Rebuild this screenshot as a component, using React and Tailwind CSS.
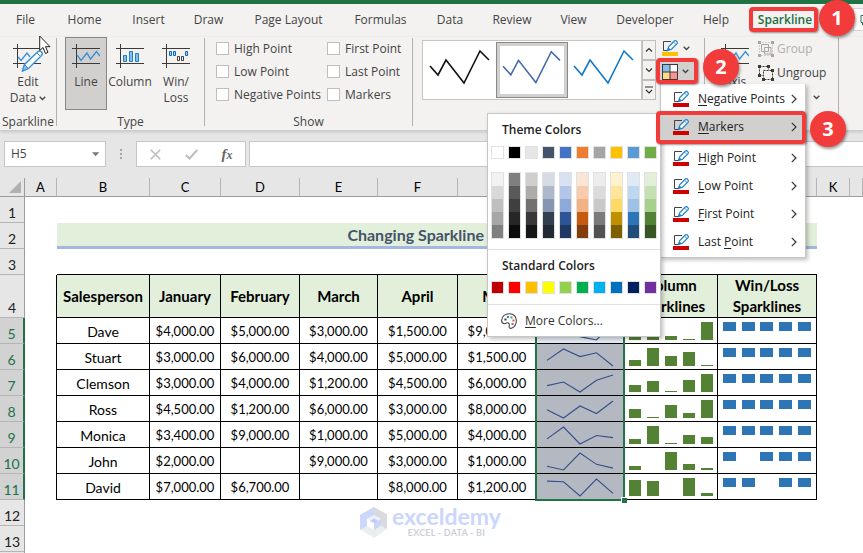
import React from "react";
import clsx from "clsx";

const TABS = [
  ["File", "w-[51px]"],
  ["Home", "w-[67px]"],
  ["Insert", "w-[61px]"],
  ["Draw", "w-[59px]"],
  ["Page Layout", "w-[101px]"],
  ["Formulas", "w-[83px]"],
  ["Data", "w-[56px]"],
  ["Review", "w-[68px]"],
  ["View", "w-[55px]"],
  ["Developer", "w-[88px]"],
  ["Help", "w-[54px]"],
];

const MONTHS = ["January", "February", "March", "April", "May"];

const PEOPLE = [
  ["Dave", [4000, 5000, 3000, 1500, 9000]],
  ["Stuart", [3000, 6000, 4000, 5000, 1500]],
  ["Clemson", [3000, 4000, 1200, 4500, 6000]],
  ["Ross", [4500, 1200, 6000, 3000, 8000]],
  ["Monica", [3400, 9000, 1000, 5000, 4000]],
  ["John", [2000, null, 9000, 3000, 1000]],
  ["David", [7000, 6700, null, 8000, 1200]],
];

const COLUMNS = [
  ["A", "w-8"],
  ["B", "w-[93px]"],
  ["C", "w-[71px]"],
  ["D", "w-[79px]"],
  ["E", "w-[78px]"],
  ["F", "w-[80px]"],
  ["G", "w-[79px]"],
  ["H", "w-[88px]"],
  ["I", "w-[93px]"],
  ["J", "w-[99px]"],
  ["K", "w-[33px]"],
  ["", ""],
];

const THEME = [
  ["White", "bg-white", ["bg-[#f2f2f2]", "bg-[#d9d9d9]", "bg-[#bfbfbf]", "bg-[#a6a6a6]", "bg-[#7f7f7f]"]],
  ["Black", "bg-black", ["bg-[#7f7f7f]", "bg-[#595959]", "bg-[#3f3f3f]", "bg-[#262626]", "bg-[#0c0c0c]"]],
  ["Light gray", "bg-[#e7e6e6]", ["bg-[#d0cece]", "bg-[#aeabab]", "bg-[#757070]", "bg-[#3a3838]", "bg-[#171616]"]],
  ["Blue-gray", "bg-[#44546a]", ["bg-[#d6dce4]", "bg-[#adb9ca]", "bg-[#8496b0]", "bg-[#323f4f]", "bg-[#222a35]"]],
  ["Blue", "bg-[#4472c4]", ["bg-[#d9e2f3]", "bg-[#b4c6e7]", "bg-[#8eaadb]", "bg-[#2f5496]", "bg-[#1f3864]"]],
  ["Orange", "bg-[#ed7d31]", ["bg-[#fbe5d5]", "bg-[#f7cbac]", "bg-[#f4b183]", "bg-[#c55a11]", "bg-[#833c0b]"]],
  ["Gray", "bg-[#a5a5a5]", ["bg-[#ededed]", "bg-[#dbdbdb]", "bg-[#c9c9c9]", "bg-[#7b7b7b]", "bg-[#525252]"]],
  ["Gold", "bg-[#ffc000]", ["bg-[#fff2cc]", "bg-[#fee599]", "bg-[#ffd965]", "bg-[#bf9000]", "bg-[#7f6000]"]],
  ["Light blue", "bg-[#5b9bd5]", ["bg-[#deebf6]", "bg-[#bdd7ee]", "bg-[#9cc3e5]", "bg-[#2e75b5]", "bg-[#1e4e79]"]],
  ["Green", "bg-[#70ad47]", ["bg-[#e2efd9]", "bg-[#c5e0b3]", "bg-[#a8d08d]", "bg-[#538135]", "bg-[#375623]"]],
];

const STANDARD = [
  ["Dark red", "bg-[#c00000]"],
  ["Red", "bg-[#ff0000]"],
  ["Orange", "bg-[#ffc000]"],
  ["Yellow", "bg-[#ffff00]"],
  ["Light green", "bg-[#92d050]"],
  ["Green", "bg-[#00b050]"],
  ["Light blue", "bg-[#00b0f0]"],
  ["Blue", "bg-[#0070c0]"],
  ["Dark blue", "bg-[#002060]"],
  ["Purple", "bg-[#7030a0]"],
];

const MENU = [
  ["", "N", "egative Points"],
  ["", "M", "arkers"],
  ["", "H", "igh Point"],
  ["", "L", "ow Point"],
  ["", "F", "irst Point"],
  ["Last ", "P", "oint"],
];

const money = (v) =>
  v === null ? "" : "$" + v.toLocaleString("en-US", { minimumFractionDigits: 2 });

/* ---------- icons ---------- */

function Axes() {
  return <path d="M0 4.5H28M0 19.5H28M4.5 0V24" stroke="#3b3a39" fill="none" />;
}

function LineIcon() {
  return (
    <svg width="28" height="28" viewBox="0 0 28 28" fill="none">
      <Axes />
      <path d="M5 11L9 16.5L15 9L18.5 15L24.5 7.5L28 12" stroke="#2f8fd8" strokeWidth="1.3" />
    </svg>
  );
}

function ColumnIcon() {
  return (
    <svg width="28" height="28" viewBox="0 0 28 28" fill="none">
      <Axes />
      <path d="M7.5 11.5h3v6h-3zM13.5 7.5h3v10h-3zM19.5 9.5h3v8h-3z" fill="#83beec" stroke="#1e7fcb" />
    </svg>
  );
}

function WinLossIcon() {
  return (
    <svg width="28" height="28" viewBox="0 0 28 28" fill="none">
      <Axes />
      <path d="M7.5 7.5h2v4h-2zM11.5 7.5h2v4h-2zM23.5 7.5h2v4h-2z" fill="#9fd0f5" stroke="#0f6cbd" />
      <path d="M15.5 12.5h2v4h-2zM19.5 12.5h2v4h-2z" fill="#fff" stroke="#3b3a39" />
    </svg>
  );
}

function EditDataIcon() {
  return (
    <svg width="30" height="28" viewBox="0 0 30 28" fill="none">
      <Axes />
      <path d="M5 13L8 16.500L14 9L17 13" stroke="#2f8fd8" strokeWidth="1.3" />
      <path d="M9.500 27L11.500 20.500L25 7.500Q27 6.500 28.500 8Q30 10 28.500 11.500L15.500 24.500Z" fill="#fff" stroke="#2f8fd8" strokeWidth="1.400" />
      <path d="M9.500 27L11.500 20.500L15.500 24.500Z" fill="#83beec" stroke="#2f8fd8" />
      <path d="M24 9L27.500 12.500" stroke="#2f8fd8" />
    </svg>
  );
}

function PenIcon({ bar }) {
  return (
    <svg width="17" height="17" viewBox="0 0 17 17" fill="none" className="shrink-0">
      <path d="M9 1.500H1.500V10.500H5" stroke="#444" />
      <path d="M5.500 10.500L6.800 6.500L12.300 1Q13.500 0.200 14.700 1.300Q15.800 2.500 15 3.700L9.500 9.200Z" fill="#fff" stroke="#1e82cf" strokeWidth="1.200" />
      <path d="M5 10.900L6.300 7.300L8.700 9.600Z" fill="#1e82cf" />
      <path d="M11.500 2L14 4.500" stroke="#1e82cf" strokeWidth="0.800" />
      <rect y="12" width="16" height="4" fill={bar} />
    </svg>
  );
}

function MarkerColorIcon() {
  return (
    <svg width="16" height="16" viewBox="0 0 16 16" className="shrink-0">
      <rect width="16" height="16" fill="#3b3a39" />
      <rect x="1" y="1" width="6.500" height="6.500" fill="#83beec" />
      <rect x="8.500" y="1" width="6.500" height="6.500" fill="#fff" />
      <rect x="1" y="8.500" width="6.500" height="6.500" fill="#ffd983" />
      <rect x="8.500" y="8.500" width="6.500" height="6.500" fill="#ff9090" />
    </svg>
  );
}

function Chevron() {
  return (
    <svg width="7" height="5" viewBox="0 0 7 5" fill="none" className="inline-block shrink-0">
      <path d="M0.700 0.700L3.500 3.500L6.300 0.700" stroke="#444" strokeWidth="1.300" />
    </svg>
  );
}

function GroupIcon({ color, split }) {
  return (
    <svg width="16" height="16" viewBox="0 0 16 16" fill="none">
      {split ? (
        <path d="M1.500 1.500H10.500V5M1.500 1.500V10.500H5M5.500 5.500H14.500V14.500H5.500Z" stroke={color} strokeDasharray="2 1" />
      ) : (
        <g stroke={color}>
          <path d="M3.500 3.500H10.500V10.500H3.500ZM6.500 6.500H13V13H6.500Z" />
          <path d="M1.500 1.500H14.500V14.500H1.500Z" strokeDasharray="1 2" />
        </g>
      )}
      {split ? (
        <path d="M0 0h3v3h-3zM9 0h3v3h-3zM0 9h3v3h-3zM13 4h3v3h-3zM4 13h3v3h-3zM13 13h3v3h-3z" fill={color} />
      ) : (
        <path d="M0 0h3v3h-3zM13 0h3v3h-3zM0 13h3v3h-3zM13 13h3v3h-3z" fill={color} />
      )}
    </svg>
  );
}

function PaletteIcon() {
  return (
    <svg width="16" height="16" viewBox="0 0 16 16" fill="none">
      <path d="M3 10.500Q0.500 10 0.600 7.500Q1.200 0.800 8.500 0.700Q15 1 15.400 7.500Q15.200 13.500 10.500 15.300Q7.800 15.800 8.200 13Q8.800 10 6.500 9.800Q5.500 9.700 4.800 10.300Q4 10.800 3 10.500Z" stroke="#444" strokeWidth="1.100" />
      <rect x="3.500" y="5.500" width="2" height="2" fill="#3b3a39" />
      <rect x="6" y="3" width="2" height="2" fill="#2f8fd8" />
      <rect x="9.500" y="3.500" width="2" height="2" fill="#3fa35b" />
      <rect x="11.500" y="6.500" width="2" height="2" fill="#e8572a" />
      <rect x="10.500" y="10" width="2" height="2" fill="#a455b5" />
    </svg>
  );
}

function Logo() {
  return (
    <svg width="28" height="31" viewBox="0 0 28 31">
      <path d="M14 0L27 7.500V22L14 31L0 22V7.500Z" fill="#e9eef0" />
      <path d="M14 0L0 8V23L7 19V12L14 8Z" fill="#cbd8fb" />
      <path d="M14 0L27 7.500V22L21 18.500V12L14 8Z" fill="#d9dadd" />
      <path d="M7 12L14 8L21 12L14 16Z" fill="#eef1fb" />
      <path d="M7 12L14 16V23L7 19Z" fill="#fff" />
      <path d="M14 16L21 12V18.500L14 23Z" fill="#c9d6fa" />
      <path d="M10 14L14 11.500L18 14L14 16Z" fill="#bccaf8" />
    </svg>
  );
}

/* ---------- sparklines ---------- */

function range(values) {
  const nums = values.map((v) => v ?? 0);
  return [nums, Math.min(...nums), Math.max(...nums)];
}

function LineSpark({ values }) {
  const [nums, lo, hi] = range(values);
  const pts = nums.map((v, i) => `${10 + i * 16.5},${22 - (17 * (v - lo)) / (hi - lo)}`).join(" ");
  return (
    <svg width="86" height="25" viewBox="0 0 86 25" className="block">
      <polyline points={pts} fill="none" stroke="#34508a" strokeWidth="1.100" />
    </svg>
  );
}

function ColumnSpark({ values }) {
  const [nums, lo, hi] = range(values);
  return (
    <svg width="92" height="25" viewBox="0 0 92 25" className="block">
      {nums.map((v, i) => {
        if (values[i] === null) return null;
        const h = Math.max(1, Math.round((18 * (v - lo)) / (hi - lo)));
        return <rect key={i} x={4 + i * 18} y={22 - h} width="12" height={h} fill="#548235" />;
      })}
    </svg>
  );
}

function WinLossSpark({ values }) {
  return (
    <svg width="98" height="25" viewBox="0 0 98 25" className="block">
      {values.map((v, i) =>
        v === null ? null : (
          <rect key={i} x={Math.round(5 + i * 18.7)} y="4" width="13" height="9" fill="#2e75b6" />
        )
      )}
    </svg>
  );
}

/* ---------- callouts ---------- */

function Badge({ n, className }) {
  return (
    <span
      className={clsx(
        "absolute z-30 flex size-9 items-center justify-center rounded-full bg-[#f23c3c] font-['Open_Sans',sans-serif] text-xl font-bold text-white shadow-[1px_2px_3px_rgba(0,0,0,0.4)]",
        className
      )}
    >
      {n}
    </span>
  );
}

function Outline({ className }) {
  return (
    <span
      className={clsx(
        "pointer-events-none absolute z-20 rounded-[4px] border-4 border-[#f23c3c] shadow-[1px_1px_2px_rgba(0,0,0,0.4)]",
        className
      )}
    />
  );
}

/* ---------- ribbon ---------- */

function Tabs() {
  return (
    <nav className="relative z-30 flex h-[33px] text-[12px]">
      {TABS.map(([name, w]) => (
        <button key={name} className={clsx("h-8 shrink-0 whitespace-nowrap text-center", w)}>
          {name}
        </button>
      ))}
      <div className="relative flex w-[84px] shrink-0 justify-center">
        <button className="mb-[5px] border-b border-[#3b3a39] pt-1 text-[12px] font-semibold text-[#1d6f42]">Sparkline</button>
        <Outline className="left-1.5 top-[3px] h-[25px] w-[69px]" />
        <Badge n="1" className="-top-1 left-[76px]" />
      </div>
      <button aria-label="Comments" className="ml-[26px] mt-1 flex h-[23px] min-w-8 items-center border border-[#d8d6d4] bg-white pl-1.5">
        <svg width="12" height="12" viewBox="0 0 12 12" fill="none">
          <path d="M1 1.500H11.500V8.500H5L2.500 11V8.500H1Z" stroke="#217346" />
        </svg>
      </button>
    </nav>
  );
}

function Separator() {
  return <div className="mb-1 mt-px w-px shrink-0 bg-[#b3b1af]" />;
}

function Group({ label, className, children }) {
  return (
    <section className={clsx("flex shrink-0 flex-col", className)}>
      <div className="flex min-h-0 flex-1 items-start">{children}</div>
      <h2 className="h-4 text-center leading-4">{label}</h2>
    </section>
  );
}

function BigButton({ icon, selected, className, children }) {
  return (
    <button
      className={clsx(
        "flex h-[73px] flex-col items-center gap-0.5 whitespace-nowrap border pt-1.5 leading-4",
        selected ? "border-[#8a8886] bg-[#d2d0ce]" : "border-transparent",
        className
      )}
    >
      {icon}
      <span>{children}</span>
    </button>
  );
}

function Check({ children }) {
  return (
    <label className="flex h-[23px] items-center gap-[5px] whitespace-nowrap">
      <input type="checkbox" className="size-[13px] shrink-0 appearance-none border border-[#c0bebc] bg-white" />
      {children}
    </label>
  );
}

function StyleItem({ color, label, selected }) {
  return (
    <button
      aria-label={label}
      className={clsx("h-14 w-[72px]", selected && "border border-[#8a8886] bg-white p-0 outline-[3px] -outline-offset-4 outline-[#d2d0ce]")}
    >
      <svg viewBox="0 0 72 56" fill="none" className="size-full">
        <polyline points="6,24 14,33 22,18 40,41 56,9 65,18" stroke={color} strokeWidth="1.600" />
      </svg>
    </button>
  );
}

function Swatches({ items }) {
  return (
    <div className="flex gap-1 px-[3px]">
      {items.map(([name, bg]) => (
        <button key={name} aria-label={name} className={clsx("size-[13px] border border-[#e1e1e1]", bg)} />
      ))}
    </div>
  );
}

function Palette() {
  return (
    <div className="absolute right-full top-0 w-[174px] border border-[#c8c6c4] bg-white pt-2 shadow-[2px_2px_4px_rgba(0,0,0,0.25)]">
      <h3 className="h-6 pl-3.5 font-semibold leading-4 text-[#222]">Theme Colors</h3>
      <Swatches items={THEME} />
      <div className="mt-[13px] flex gap-1 px-[3px]">
        {THEME.map(([name, , shades]) => (
          <div key={name} className="flex w-[13px] flex-col border border-[#e1e1e1]">
            {shades.map((s, i) => (
              <button key={s} aria-label={`${name} shade ${i + 1}`} className={clsx("h-[13px]", s)} />
            ))}
          </div>
        ))}
      </div>
      <h3 className="mt-2.5 h-8 border-t border-[#e1e1e1] pl-3.5 pt-2 font-semibold leading-4 text-[#222]">Standard Colors</h3>
      <Swatches items={STANDARD} />
      <button className="mt-2.5 flex h-8 w-full items-center gap-2 border-t border-[#e1e1e1] pl-[13px] text-[#333]">
        <PaletteIcon />
        <span>
          <u className="underline-offset-2">M</u>ore Colors...
        </span>
      </button>
    </div>
  );
}

function MarkerMenu() {
  return (
    <div className="absolute left-[3px] top-6 z-10 w-[146px] border border-t-0 border-[#c8c6c4] bg-white pb-px pt-px text-[#222] shadow-[2px_2px_4px_rgba(0,0,0,0.25)]">
      {MENU.map(([pre, key, post], i) => {
        const open = i === 1;
        return (
          <div key={key} className={clsx("relative", open && "mb-[3px]")}>
            {open && (
              <>
                <Palette />
                <Outline className="-left-[5px] -top-0.5 h-[33px] w-[150px]" />
                <Badge n="3" className="-top-0.5 left-[149px]" />
              </>
            )}
            <button className={clsx("flex h-7 w-full items-center whitespace-nowrap pl-3 pr-2", open && "relative z-10 bg-[#d2d0ce]")}>
              <PenIcon bar="#d00000" />
              <span className="ml-2 flex-1 text-left">
                {pre}
                <u className="underline-offset-2">{key}</u>
                {post}
              </span>
              <svg width="6" height="10" viewBox="0 0 6 10" fill="none">
                <path d="M0.800 0.800L5 5L0.800 9.200" stroke="#333" strokeWidth="1.200" />
              </svg>
            </button>
          </div>
        );
      })}
    </div>
  );
}

function ScrollButton({ label, d }) {
  return (
    <button aria-label={label} className="flex h-5 items-center justify-center border border-[#c0bebc]">
      <svg width="8" height="8" viewBox="0 0 8 8" fill="none">
        <path d={d} stroke="#333" strokeWidth="1.200" />
      </svg>
    </button>
  );
}

function Ribbon() {
  return (
    <div className="relative z-20 flex h-[94px] border-b border-[#cfcdcb] text-[12px] shadow-[0_1px_3px_rgba(0,0,0,0.15)]">
      <Group label="Sparkline" className="w-14">
        <BigButton icon={<EditDataIcon />} className="w-full">
          Edit
          <br />
          Data <Chevron />
        </BigButton>
      </Group>
      <Separator />
      <Group label="Type" className="w-[147px]">
        <BigButton icon={<LineIcon />} selected className="ml-2 w-[42px]">
          Line
        </BigButton>
        <BigButton icon={<ColumnIcon />} className="w-[46px]">
          Column
        </BigButton>
        <BigButton icon={<WinLossIcon />} className="w-[46px]">
          Win/
          <br />
          Loss
        </BigButton>
      </Group>
      <Separator />
      <Group label="Show" className="w-[207px]">
        <div className="grid grid-cols-[111px_auto] pl-[11px]">
          <Check>High Point</Check>
          <Check>First Point</Check>
          <Check>Low Point</Check>
          <Check>Last Point</Check>
          <Check>Negative Points</Check>
          <Check>Markers</Check>
        </div>
      </Group>
      <Separator />
      <Group className="w-[291px]">
        <div className="ml-[9px] mt-[3px] flex h-[60px] w-[220px] items-center border border-[#c8c6c4] bg-white pl-px">
          <StyleItem color="#111" label="Black style" />
          <StyleItem color="#3f68a8" label="Dark blue style" selected />
          <StyleItem color="#1079cb" label="Blue style" />
        </div>
        <div className="mt-[3px] flex w-[14px] flex-col">
          <ScrollButton label="Previous styles" d="M1 5.500L4 2.500L7 5.500" />
          <ScrollButton label="Next styles" d="M1 2.500L4 5.500L7 2.500" />
          <ScrollButton label="More styles" d="M0 1H8M1 4L4 7L7 4" />
        </div>
        <div className="ml-px flex w-[41px] flex-col">
          <button aria-label="Sparkline color" className="flex h-[23px] items-center gap-1 pl-[5px]">
            <PenIcon bar="#ffc000" />
            <Chevron />
          </button>
          <div className="relative">
            <button aria-label="Marker color" className="flex h-[23px] w-full items-center gap-1 bg-[#d2d0ce] pl-[5px]">
              <MarkerColorIcon />
              <Chevron />
            </button>
            <Outline className="-left-px -top-0.5 z-20 h-[26px] w-[42px]" />
            <Badge n="2" className="-top-[11px] left-[46px]" />
            <MarkerMenu />
          </div>
        </div>
      </Group>
      <Separator />
      <Group className="w-[133px]">
        <BigButton icon={<LineIcon />} className="ml-2.5 w-10">
          Axis
        </BigButton>
        <div className="ml-[3px] flex flex-col">
          <button className="flex h-6 items-center gap-[3px] text-[#b1afad]">
            <GroupIcon color="#a8a6a4" /> Group
          </button>
          <button className="flex h-6 items-center gap-[3px]">
            <GroupIcon color="#3b3a39" split /> Ungroup
          </button>
          <button aria-label="Clear" className="flex h-6 items-center justify-end pr-1.5">
            <Chevron />
          </button>
        </div>
      </Group>
      <Separator />
    </div>
  );
}

function FormulaBar() {
  return (
    <div className="flex h-[47px] items-start pl-1 pt-2.5 text-[12px]">
      <div className="flex h-[26px] w-[102px] items-center border border-[#c6c6c6] bg-white px-1.5">
        <input aria-label="Name box" defaultValue="H5" className="w-full min-w-0 bg-transparent text-[#444]" />
        <svg width="8" height="5" viewBox="0 0 8 5">
          <path d="M0 0H8L4 4.500Z" fill="#777" />
        </svg>
      </div>
      <svg width="30" height="26" viewBox="0 0 30 26" className="shrink-0">
        <path d="M14 8h2v2h-2zM14 12h2v2h-2zM14 16h2v2h-2z" fill="#a6a6a6" />
      </svg>
      <div className="flex h-[26px] w-[110px] shrink-0 items-center border border-[#c6c6c6] bg-white">
        <button aria-label="Cancel" className="flex w-9 justify-center">
          <svg width="11" height="11" viewBox="0 0 11 11">
            <path d="M0.800 0.800L10.200 10.200M10.200 0.800L0.800 10.200" stroke="#bdbdbd" strokeWidth="1.600" />
          </svg>
        </button>
        <button aria-label="Enter" className="flex w-9 justify-center">
          <svg width="13" height="11" viewBox="0 0 13 11" fill="none">
            <path d="M0.800 6L4.500 9.500L12.200 1" stroke="#bdbdbd" strokeWidth="2" />
          </svg>
        </button>
        <button className="w-9 text-center font-['Liberation_Serif',serif] text-[15px] font-bold italic text-[#666]">
          f<span className="text-[12px]">x</span>
        </button>
      </div>
      <input aria-label="Formula" className="ml-[3px] h-[26px] min-w-0 flex-1 border border-r-0 border-[#c6c6c6] bg-white" />
    </div>
  );
}

/* ---------- worksheet ---------- */

function RowHead({ n, className }) {
  const selected = n >= 5 && n <= 11;
  return (
    <th
      scope="row"
      className={clsx(
        "border-b border-b-[#b5b5b5] p-0 text-center align-bottom text-[14px] font-normal leading-[18px]",
        selected ? "border-r-2 border-r-[#217346] bg-[#d2d2d2] text-[#217346]" : "border-r border-r-[#9c9c9c] bg-[#e6e6e6] text-[#222]",
        className
      )}
    >
      {n}
    </th>
  );
}

const CELL = "border-b border-r border-black p-0 text-center";
const TEXT_CELL = "border-b border-r border-black px-0 pb-0 text-center";
const HEAD = "border-b border-r border-black bg-[#e2efda] p-0 text-center text-[15px] font-bold leading-[21px]";

function Sheet() {
  return (
    <main className="relative flex-1 overflow-hidden bg-white font-['Lato','Liberation_Sans',sans-serif]">
      <table className="w-full table-fixed border-separate border-spacing-0 text-[13px] text-black">
        <colgroup>
          <col className="w-[25px]" />
          {COLUMNS.map(([c, w]) => (
            <col key={c} className={w} />
          ))}
        </colgroup>
        <thead>
          <tr className="h-[19px] bg-[#e6e6e6]">
            <th className="border-b border-r border-[#9c9c9c] p-0">
              <svg width="12" height="12" viewBox="0 0 12 12" className="ml-auto mr-[3px]">
                <path d="M12 0V12H0Z" fill="#b1b1b1" />
              </svg>
            </th>
            {COLUMNS.map(([c]) => (
              <th
                key={c}
                scope="col"
                className={clsx(
                  "border-b border-r border-r-[#b5b5b5] p-0 text-center text-[13px] font-normal leading-4",
                  c === "H" ? "border-b-2 border-b-[#217346] bg-[#d2d2d2] text-[#217346]" : "border-b-[#9c9c9c]"
                )}
              >
                {c}
              </th>
            ))}
          </tr>
        </thead>
        <tbody>
          <tr className="h-[26px]">
            <RowHead n={1} />
            <td colSpan={12} />
          </tr>
          <tr className="h-[26px]">
            <RowHead n={2} />
            <td />
            <td colSpan={9} className="border-b-[3px] border-[#a2b8e1] bg-[#e2efda] p-0 text-center text-[16px] font-bold leading-[22px] text-[#44546a]">
              Changing Sparkline Color
            </td>
            <td colSpan={2} />
          </tr>
          <tr className="h-[26px]">
            <RowHead n={3} />
            <td />
            <td colSpan={9} className="border-b border-black" />
            <td colSpan={2} />
          </tr>
          <tr className="h-[43px]">
            <RowHead n={4} />
            <td className="border-r border-black" />
            <th className={HEAD}>Salesperson</th>
            {MONTHS.map((m) => (
              <th key={m} className={HEAD}>
                {m}
              </th>
            ))}
            <th className={HEAD}>
              Line
              <br />
              Sparklines
            </th>
            <th className={HEAD}>
              Column
              <br />
              Sparklines
            </th>
            <th className={HEAD}>
              Win/Loss
              <br />
              Sparklines
            </th>
            <td colSpan={2} />
          </tr>
          {PEOPLE.map(([name, values], i) => (
            <tr key={name} className="h-[26px]">
              <RowHead n={i + 5} />
              <td className="border-r border-black" />
              <td className={clsx(TEXT_CELL, "pt-px text-[14px]")}>{name}</td>
              {values.map((v, j) => (
                <td key={j} className={clsx(TEXT_CELL, "pt-0.5")}>
                  {money(v)}
                </td>
              ))}
              <td className={clsx(CELL, "relative", i === 0 ? "bg-[#e3eaf5]" : "bg-[#b4b9c1]")}>
                <LineSpark values={values} />
                {i === 0 && (
                  <span className="absolute -left-0.5 -top-0.5 z-10 h-[185px] w-[90px] border-2 border-[#217346]">
                    <span className="absolute -bottom-1 -right-1 size-1.5 border-l border-t border-white bg-[#217346]" />
                  </span>
                )}
              </td>
              <td className={CELL}>
                <ColumnSpark values={values} />
              </td>
              <td className={CELL}>
                <WinLossSpark values={values} />
              </td>
              <td colSpan={2} />
            </tr>
          ))}
          {[12, 13].map((n) => (
            <tr key={n} className="h-[26px]">
              <RowHead n={n} />
              <td colSpan={12} />
            </tr>
          ))}
          <tr className="h-[26px]">
            <RowHead />
            <td colSpan={12} />
          </tr>
        </tbody>
      </table>
      <div className="absolute left-[360px] top-[327px] flex items-center gap-1">
        <Logo />
        <div className="flex flex-col items-center">
          <span className="text-[23px] font-bold leading-[22px] text-[#cbd6fb]">exceldemy</span>
          <span className="text-[9px] font-bold leading-3 tracking-wide text-[#cdd0d8]">EXCEL - DATA - BI</span>
        </div>
      </div>
    </main>
  );
}

export default function App() {
  return (
    <div className="relative flex h-screen flex-col overflow-hidden bg-[#e6e6e6] font-['Open_Sans','Noto_Sans',sans-serif] text-[#444]">
      <div className="h-1 shrink-0 bg-[#217346]" />
      <header className="relative z-20 shrink-0 bg-[#f3f2f1]">
        <Tabs />
        <Ribbon />
        <svg width="13" height="20" viewBox="0 0 13 20" className="absolute left-[39px] top-[31px] z-30">
          <path d="M0.700 1V15.500L4 12.500L6.500 18.500L9 17.300L6.500 11.700H11Z" fill="#fff" stroke="#222" />
        </svg>
      </header>
      <FormulaBar />
      <Sheet />
    </div>
  );
}
